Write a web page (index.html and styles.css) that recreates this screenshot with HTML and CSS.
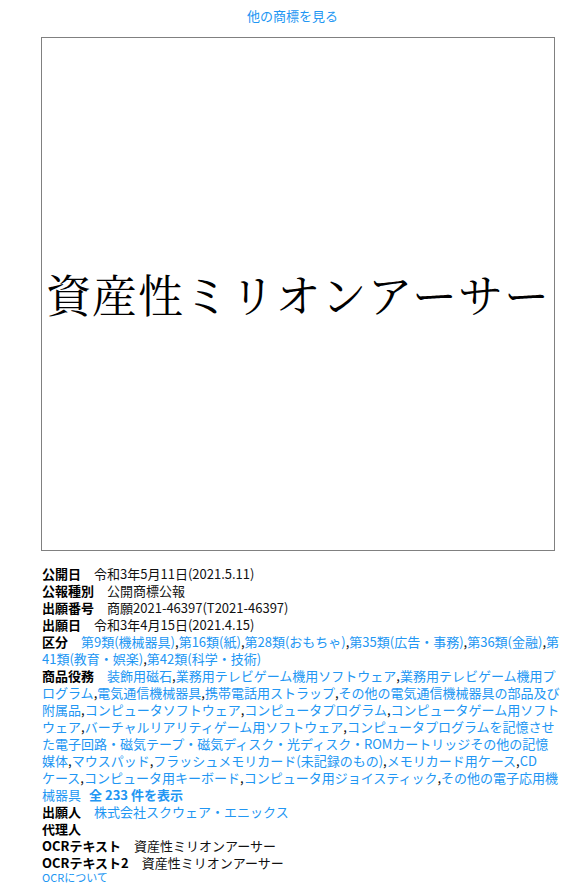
FILE: index.html
```html
<!DOCTYPE html>
<html lang="ja">
<head>
<meta charset="utf-8">
<link rel="stylesheet" href="styles.css">
</head>
<body>
<div class="page">
  <div class="more"><a href="#">他の商標を見る</a></div>
  <div class="mark">
    <span class="mark-text">資産性ミリオンアーサー</span>
  </div>
  <div class="details">
    <div class="row"><b class="label">公開日</b><span class="val">令和3年5月11日(2021.5.11)</span></div>
    <div class="row"><b class="label">公報種別</b><span class="val">公開商標公報</span></div>
    <div class="row"><b class="label">出願番号</b><span class="val">商願2021-46397(T2021-46397)</span></div>
    <div class="row"><b class="label">出願日</b><span class="val">令和3年4月15日(2021.4.15)</span></div>
    <div class="row"><b class="label">区分</b><a href="#">第9類(機械器具)</a>,<a href="#">第16類(紙)</a>,<a href="#">第28類(おもちゃ)</a>,<a href="#">第35類(広告・事務)</a>,<a href="#">第36類(金融)</a>,<a href="#">第<br>41類(教育・娯楽)</a>,<a href="#">第42類(科学・技術)</a></div>
    <div class="row"><b class="label">商品役務</b><a href="#">装飾用磁石</a>,<a href="#">業務用テレビゲーム機用ソフトウェア</a>,<a href="#">業務用テレビゲーム機用プ<br>ログラム</a>,<a href="#">電気通信機械器具</a>,<a href="#">携帯電話用ストラップ</a>,<a href="#">その他の電気通信機械器具の部品及び<br>附属品</a>,<a href="#">コンピュータソフトウェア</a>,<a href="#">コンピュータプログラム</a>,<a href="#">コンピュータゲーム用ソフト<br>ウェア</a>,<a href="#">バーチャルリアリティゲーム用ソフトウェア</a>,<a href="#">コンピュータプログラムを記憶させ<br>た電子回路・磁気テープ・磁気ディスク・光ディスク・ROMカートリッジその他の記憶<br>媒体</a>,<a href="#">マウスパッド</a>,<a href="#">フラッシュメモリカード(未記録のもの)</a>,<a href="#">メモリカード用ケース</a>,<a href="#">CD<br>ケース</a>,<a href="#">コンピュータ用キーボード</a>,<a href="#">コンピュータ用ジョイスティック</a>,<a href="#">その他の電子応用機<br>械器具</a><a href="#" class="all">全 233 件を表示</a></div>
    <div class="row"><b class="label">出願人</b><a href="#">株式会社スクウェア・エニックス</a></div>
    <div class="row"><b class="label">代理人</b></div>
    <div class="row"><b class="label">OCRテキスト</b><span class="val">資産性ミリオンアーサー</span></div>
    <div class="row"><b class="label">OCRテキスト2</b><span class="val">資産性ミリオンアーサー</span></div>
    <div class="row small"><a href="#">OCRについて</a></div>
  </div>
</div>
</body>
</html>
```

FILE: styles.css
```css
html, body {
  margin: 0;
  padding: 0;
  background: #fff;
}
body {
  font-family: "Noto Sans CJK JP", "Noto Sans", sans-serif;
  font-size: 13px;
  line-height: 17px;
  color: #111;
}
a {
  color: #2196f3;
  text-decoration: none;
}
.page {
  padding: 6px 30px 0 41px;
}
.more {
  text-align: center;
  margin-left: -41px;
  margin-right: -30px;
  height: 20px;
  line-height: 20px;
}
.mark {
  margin-top: 11px;
  width: 512px;
  height: 512px;
  border: 1px solid #808080;
  display: flex;
  align-items: center;
  justify-content: center;
  background: #fff;
}
.mark-text {
  font-family: "Noto Serif CJK JP", "IPAMincho", "DejaVu Serif", serif;
  font-size: 45px;
  line-height: 50px;
  letter-spacing: 1px;
  color: #000;
  font-weight: 400;
}
.details {
  margin-top: 14px;
  margin-right: -10px;
  padding-left: 1px;
}
.label {
  color: #000;
  font-weight: 700;
  margin-right: 13px;
}
.all {
  font-weight: 700;
  margin-left: 8px;
}
.small {
  font-size: 11px;
  line-height: 12px;
}
```
